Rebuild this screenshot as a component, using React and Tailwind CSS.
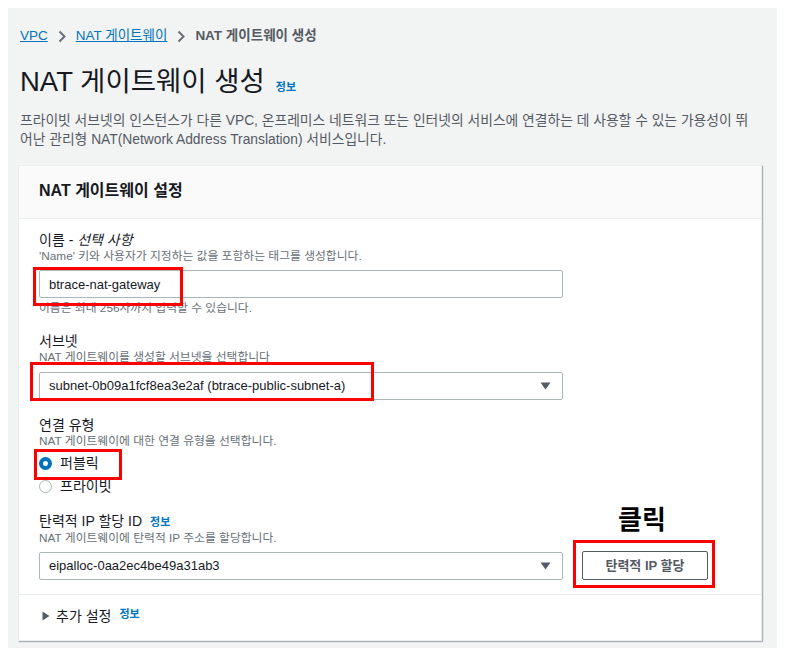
import React, { useState } from 'react';

const font = { fontFamily: '"Liberation Sans", "Noto Sans CJK KR", sans-serif' };

const Caret = () => (
  <svg width="11" height="8" viewBox="0 0 11 8" className="shrink-0">
    <path d="M0.5 0.5 L10.5 0.5 L5.5 7.5 Z" fill="#545b64" />
  </svg>
);

const Chevron = () => (
  <svg width="8" height="13" viewBox="0 0 8 13" className="mx-[10px] shrink-0">
    <path d="M1.5 1.5 L6.5 6.5 L1.5 11.5" fill="none" stroke="#687078" strokeWidth="2" />
  </svg>
);

const Field = ({ label, desc, children, className = '' }) => (
  <div className={className}>
    <div className="text-[14px] leading-[18px] text-[#16191f]">{label}</div>
    <div className="text-[11.8px] leading-[14px] text-[#687078]">{desc}</div>
    {children}
  </div>
);

const Select = ({ value }) => (
  <div className="h-[28px] w-[524px] flex items-center justify-between border border-[#aab7b8] rounded-[2px] bg-white pl-[9px] pr-[11px]">
    <span className="text-[13px] text-[#16191f] whitespace-nowrap">{value}</span>
    <Caret />
  </div>
);

const Radio = ({ checked, label, onClick }) => (
  <button type="button" onClick={onClick} className="flex items-center gap-[8px] h-[23px]">
    {checked ? (
      <span className="h-[13px] w-[13px] rounded-full border-[4px] border-[#0073bb] bg-white" />
    ) : (
      <span className="h-[13px] w-[13px] rounded-full border border-[#aab7b8] bg-white" />
    )}
    <span className="text-[14px] text-[#16191f]">{label}</span>
  </button>
);

const Mark = ({ className }) => (
  <div className={`absolute border-[3px] border-[#ff0000] pointer-events-none ${className}`} />
);

const App = () => {
  const [type, setType] = useState('public');
  const [name, setName] = useState('btrace-nat-gateway');

  return (
    <div className="bg-white h-[662px] pt-[8px] px-[8px]" style={font}>
      <div className="bg-[#f2f3f3] h-[640px] pt-[18px]">
        <nav className="flex items-center pl-[12px] h-[20px] text-[13.5px]">
          <a className="text-[#0073bb] underline">VPC</a>
          <Chevron />
          <a className="text-[#0073bb] underline">NAT 게이트웨이</a>
          <Chevron />
          <span className="font-bold text-[#545b64]">NAT 게이트웨이 생성</span>
        </nav>

        <div className="flex items-baseline gap-[11px] pl-[12px] mt-[20px] h-[32px]">
          <h1 className="text-[27.5px] leading-[32px] text-[#16191f]">NAT 게이트웨이 생성</h1>
          <a className="text-[11px] font-bold text-[#0073bb]">정보</a>
        </div>

        <p className="pl-[12px] mt-[13px] text-[13.8px] leading-[19px] text-[#545b64] whitespace-nowrap">
          프라이빗 서브넷의 인스턴스가 다른 VPC, 온프레미스 네트워크 또는 인터넷의 서비스에 연결하는 데 사용할 수 있는 가용성이 뛰
          <br />
          어난 관리형 NAT(Network Address Translation) 서비스입니다.
        </p>

        <div className="relative ml-[10px] mt-[16px] w-[744px] bg-white border border-[#eaeded] shadow-[1px_1px_1px_rgba(0,28,36,0.3)]">
          <div className="h-[53px] px-5 pt-[14px] bg-[#fafafa] border-b border-[#eaeded]">
            <h2 className="text-[16px] leading-[22px] font-bold text-[#16191f]">NAT 게이트웨이 설정</h2>
          </div>

          <div className="px-5 pt-[12px] pb-[14px] border-b border-[#eaeded]">
            <Field label={<>이름 - <i>선택 사항</i></>} desc="'Name' 키와 사용자가 지정하는 값을 포함하는 태그를 생성합니다.">
              <input
                value={name}
                onChange={(e) => setName(e.target.value)}
                className="mt-[7px] h-[28px] w-[524px] border border-[#aab7b8] rounded-[2px] px-[9px] text-[13px] text-[#16191f] outline-none"
              />
              <div className="mt-[3px] text-[11.8px] leading-[14px] text-[#687078]">이름은 최대 256자까지 입력할 수 있습니다.</div>
            </Field>

            <Field className="mt-[17px]" label="서브넷" desc="NAT 게이트웨이를 생성할 서브넷을 선택합니다">
              <div className="mt-[8px]">
                <Select value="subnet-0b09a1fcf8ea3e2af (btrace-public-subnet-a)" />
              </div>
            </Field>

            <Field className="mt-[16px]" label="연결 유형" desc="NAT 게이트웨이에 대한 연결 유형을 선택합니다.">
              <div className="mt-[4px] flex flex-col items-start">
                <Radio checked={type === 'public'} label="퍼블릭" onClick={() => setType('public')} />
                <Radio checked={type === 'private'} label="프라이빗" onClick={() => setType('private')} />
              </div>
            </Field>

            <Field
              className="mt-[14px]"
              label={<span className="flex items-baseline gap-[8px]">탄력적 IP 할당 ID <a className="text-[11px] font-bold text-[#0073bb]">정보</a></span>}
              desc="NAT 게이트웨이에 탄력적 IP 주소를 할당합니다."
            >
              <div className="mt-[6px] flex items-center gap-[19px]">
                <Select value="eipalloc-0aa2ec4be49a31ab3" />
                <button type="button" className="h-[29px] w-[126px] border border-[#545b64] rounded-[2px] bg-white text-[13px] font-bold text-[#545b64]">
                  탄력적 IP 할당
                </button>
              </div>
            </Field>
          </div>

          <div className="flex items-center gap-[6px] px-5 pt-[11px] pb-[14px] h-[45px]">
            <svg width="8" height="10" viewBox="0 0 8 10" className="ml-[3px]">
              <path d="M0.5 0.5 L7.5 5 L0.5 9.5 Z" fill="#545b64" />
            </svg>
            <span className="text-[14px] text-[#16191f]">추가 설정</span>
            <a className="ml-[2px] -mt-[4px] text-[11px] font-bold text-[#0073bb]">정보</a>
          </div>

          <Mark className="left-[14px] top-[101px] w-[150px] h-[39px]" />
          <Mark className="left-[11px] top-[196px] w-[344px] h-[39px]" />
          <Mark className="left-[15px] top-[283px] w-[88px] h-[31px]" />
          <Mark className="left-[554px] top-[374px] w-[142px] h-[48px]" />
          <div className="absolute left-[599px] top-[335px] text-[26px] leading-[34px] font-bold text-black" style={{ fontFamily: '"Noto Sans CJK KR", sans-serif' }}>
            클릭
          </div>
        </div>
      </div>
    </div>
  );
};

export default App;
